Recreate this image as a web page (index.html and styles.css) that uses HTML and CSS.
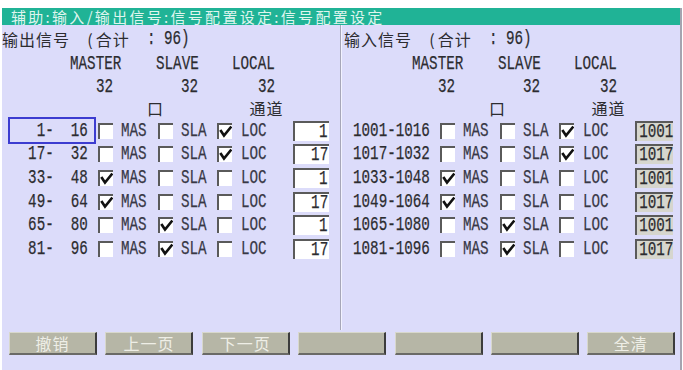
FILE: index.html
```html
<!DOCTYPE html>
<html lang="zh-CN">
<head>
<meta charset="utf-8">
<title>信号配置设定</title>
<link rel="stylesheet" href="styles.css">
</head>
<body>
<div class="screen">
  <div class="titlebar">辅助:输入/输出信号:信号配置设定:信号配置设定</div>
  <div class="main">
    <section class="panel">
      <div class="line hdr">
        <span class="cjk h-name">输出信号</span>
        <span class="cjk h-par">(</span>
        <span class="cjk h-sum">合计</span>
        <span class="lat h-col">:</span>
        <span class="lat h-tot">96)</span>
      </div>
      <div class="line mst">
        <span class="lat m-mas">MASTER</span>
        <span class="lat m-sla">SLAVE</span>
        <span class="lat m-loc">LOCAL</span>
      </div>
      <div class="line num">
        <span class="lat n-1">32</span>
        <span class="lat n-2">32</span>
        <span class="lat n-3">32</span>
      </div>
      <div class="line chl">
        <span class="cjk k-port">口</span>
        <span class="cjk k-chan">通道</span>
      </div>
      <div class="line row">
        <div class="c-lab sel"><span class="lat">   1-  16</span></div>
        <span class="cb c-cb1"></span><span class="lat dim c-mas">MAS</span>
        <span class="cb c-cb2"></span><span class="lat dim c-sla">SLA</span>
        <span class="cb c-cb3 on"><svg viewBox="0 0 13 14"><polyline points="2,6 5,10.5 11.5,2.5"/></svg></span><span class="lat dim c-loc">LOC</span>
        <span class="inp c-in"><span class="lat">1</span></span>
      </div>
      <div class="line row">
        <div class="c-lab"><span class="lat">  17-  32</span></div>
        <span class="cb c-cb1"></span><span class="lat dim c-mas">MAS</span>
        <span class="cb c-cb2"></span><span class="lat dim c-sla">SLA</span>
        <span class="cb c-cb3 on"><svg viewBox="0 0 13 14"><polyline points="2,6 5,10.5 11.5,2.5"/></svg></span><span class="lat dim c-loc">LOC</span>
        <span class="inp c-in"><span class="lat">17</span></span>
      </div>
      <div class="line row">
        <div class="c-lab"><span class="lat">  33-  48</span></div>
        <span class="cb c-cb1 on"><svg viewBox="0 0 13 14"><polyline points="2,6 5,10.5 11.5,2.5"/></svg></span><span class="lat dim c-mas">MAS</span>
        <span class="cb c-cb2"></span><span class="lat dim c-sla">SLA</span>
        <span class="cb c-cb3"></span><span class="lat dim c-loc">LOC</span>
        <span class="inp c-in"><span class="lat">1</span></span>
      </div>
      <div class="line row">
        <div class="c-lab"><span class="lat">  49-  64</span></div>
        <span class="cb c-cb1 on"><svg viewBox="0 0 13 14"><polyline points="2,6 5,10.5 11.5,2.5"/></svg></span><span class="lat dim c-mas">MAS</span>
        <span class="cb c-cb2"></span><span class="lat dim c-sla">SLA</span>
        <span class="cb c-cb3"></span><span class="lat dim c-loc">LOC</span>
        <span class="inp c-in"><span class="lat">17</span></span>
      </div>
      <div class="line row">
        <div class="c-lab"><span class="lat">  65-  80</span></div>
        <span class="cb c-cb1"></span><span class="lat dim c-mas">MAS</span>
        <span class="cb c-cb2 on"><svg viewBox="0 0 13 14"><polyline points="2,6 5,10.5 11.5,2.5"/></svg></span><span class="lat dim c-sla">SLA</span>
        <span class="cb c-cb3"></span><span class="lat dim c-loc">LOC</span>
        <span class="inp c-in"><span class="lat">1</span></span>
      </div>
      <div class="line row">
        <div class="c-lab"><span class="lat">  81-  96</span></div>
        <span class="cb c-cb1"></span><span class="lat dim c-mas">MAS</span>
        <span class="cb c-cb2 on"><svg viewBox="0 0 13 14"><polyline points="2,6 5,10.5 11.5,2.5"/></svg></span><span class="lat dim c-sla">SLA</span>
        <span class="cb c-cb3"></span><span class="lat dim c-loc">LOC</span>
        <span class="inp c-in"><span class="lat">17</span></span>
      </div>
    </section>
    <div class="divider"></div>
    <section class="panel right">
      <div class="line hdr">
        <span class="cjk h-name">输入信号</span>
        <span class="cjk h-par">(</span>
        <span class="cjk h-sum">合计</span>
        <span class="lat h-col">:</span>
        <span class="lat h-tot">96)</span>
      </div>
      <div class="line mst">
        <span class="lat m-mas">MASTER</span>
        <span class="lat m-sla">SLAVE</span>
        <span class="lat m-loc">LOCAL</span>
      </div>
      <div class="line num">
        <span class="lat n-1">32</span>
        <span class="lat n-2">32</span>
        <span class="lat n-3">32</span>
      </div>
      <div class="line chl">
        <span class="cjk k-port">口</span>
        <span class="cjk k-chan">通道</span>
      </div>
      <div class="line row">
        <div class="c-lab"><span class="lat">1001-1016</span></div>
        <span class="cb c-cb1"></span><span class="lat dim c-mas">MAS</span>
        <span class="cb c-cb2"></span><span class="lat dim c-sla">SLA</span>
        <span class="cb c-cb3 on"><svg viewBox="0 0 13 14"><polyline points="2,6 5,10.5 11.5,2.5"/></svg></span><span class="lat dim c-loc">LOC</span>
        <span class="inp gray c-in"><span class="lat">1001</span></span>
      </div>
      <div class="line row">
        <div class="c-lab"><span class="lat">1017-1032</span></div>
        <span class="cb c-cb1"></span><span class="lat dim c-mas">MAS</span>
        <span class="cb c-cb2"></span><span class="lat dim c-sla">SLA</span>
        <span class="cb c-cb3 on"><svg viewBox="0 0 13 14"><polyline points="2,6 5,10.5 11.5,2.5"/></svg></span><span class="lat dim c-loc">LOC</span>
        <span class="inp gray c-in"><span class="lat">1017</span></span>
      </div>
      <div class="line row">
        <div class="c-lab"><span class="lat">1033-1048</span></div>
        <span class="cb c-cb1 on"><svg viewBox="0 0 13 14"><polyline points="2,6 5,10.5 11.5,2.5"/></svg></span><span class="lat dim c-mas">MAS</span>
        <span class="cb c-cb2"></span><span class="lat dim c-sla">SLA</span>
        <span class="cb c-cb3"></span><span class="lat dim c-loc">LOC</span>
        <span class="inp gray c-in"><span class="lat">1001</span></span>
      </div>
      <div class="line row">
        <div class="c-lab"><span class="lat">1049-1064</span></div>
        <span class="cb c-cb1 on"><svg viewBox="0 0 13 14"><polyline points="2,6 5,10.5 11.5,2.5"/></svg></span><span class="lat dim c-mas">MAS</span>
        <span class="cb c-cb2"></span><span class="lat dim c-sla">SLA</span>
        <span class="cb c-cb3"></span><span class="lat dim c-loc">LOC</span>
        <span class="inp gray c-in"><span class="lat">1017</span></span>
      </div>
      <div class="line row">
        <div class="c-lab"><span class="lat">1065-1080</span></div>
        <span class="cb c-cb1"></span><span class="lat dim c-mas">MAS</span>
        <span class="cb c-cb2 on"><svg viewBox="0 0 13 14"><polyline points="2,6 5,10.5 11.5,2.5"/></svg></span><span class="lat dim c-sla">SLA</span>
        <span class="cb c-cb3"></span><span class="lat dim c-loc">LOC</span>
        <span class="inp gray c-in"><span class="lat">1001</span></span>
      </div>
      <div class="line row">
        <div class="c-lab"><span class="lat">1081-1096</span></div>
        <span class="cb c-cb1"></span><span class="lat dim c-mas">MAS</span>
        <span class="cb c-cb2 on"><svg viewBox="0 0 13 14"><polyline points="2,6 5,10.5 11.5,2.5"/></svg></span><span class="lat dim c-sla">SLA</span>
        <span class="cb c-cb3"></span><span class="lat dim c-loc">LOC</span>
        <span class="inp gray c-in"><span class="lat">1017</span></span>
      </div>
    </section>
  </div>
  <div class="buttons">
    <button class="btn">撤销</button>
    <button class="btn">上一页</button>
    <button class="btn">下一页</button>
    <button class="btn"></button>
    <button class="btn"></button>
    <button class="btn"></button>
    <button class="btn">全清</button>
  </div>
</div>
</body>
</html>
```

FILE: styles.css
```css
html, body {
  margin: 0;
  padding: 0;
  background: #ffffff;
}
body {
  width: 683px;
  height: 370px;
  overflow: hidden;
}
.screen {
  margin: 8px 0 0 2px;
  width: 678px;
  height: 362px;
  background: #dcdcfa;
  border-right: 2px solid #a4a4b0;
  display: flex;
  flex-direction: column;
}
.titlebar {
  height: 17px;
  line-height: 17px;
  background: #20b396;
  color: #dff5ee;
  font-family: "Noto Sans CJK SC", sans-serif;
  font-size: 15px;
  letter-spacing: 2.3px;
  padding-left: 9px;
  white-space: nowrap;
}
.main {
  display: flex;
  height: 305px;
}
.panel {
  width: 338px;
  padding-top: 2px;
  display: flex;
  flex-direction: column;
}
.panel.right {
  width: 336px;
  padding-left: 2px;
}
.divider {
  width: 1px;
  border-left: 1px solid #a6a6b8;
  background: #f2f2ff;
}
.line {
  display: grid;
  grid-template-columns: repeat(39, 8.54px);
  align-items: center;
  color: #2c2c30;
}
.hdr { height: 24px; }
.mst { height: 25px; }
.num { height: 21px; }
.chl { height: 22px; }
.row { height: 23.6px; }

.cjk {
  font-family: "Noto Sans CJK SC", sans-serif;
  font-size: 16px;
  letter-spacing: 1px;
  line-height: 18px;
  white-space: nowrap;
}
/* tall, narrow monospace text on an 8.54px character grid */
.lat {
  justify-self: start;
  display: inline-block;
  font-family: "Liberation Mono", monospace;
  font-weight: normal;
  font-size: 21px;
  line-height: 18px;
  white-space: pre;
  -webkit-text-stroke: 0.25px currentColor;
  transform: scaleX(0.678);
  transform-origin: 0 50%;
}
.dim { color: #383846; }

.h-name { grid-column: 1 / span 8; }
.h-par  { grid-column: 11 / span 1; }
.h-sum  { grid-column: 12 / span 4; }
.h-col  { grid-column: 18 / span 1; }
.h-tot  { grid-column: 20 / span 3; }

.m-mas { grid-column: 9 / span 6; }
.m-sla { grid-column: 19 / span 5; }
.m-loc { grid-column: 28 / span 5; }

.n-1 { grid-column: 12 / span 2; }
.n-2 { grid-column: 22 / span 2; }
.n-3 { grid-column: 31 / span 2; }

.k-port { grid-column: 18 / span 2; }
.k-chan { grid-column: 30 / span 4; }

.c-lab { grid-column: 2 / span 9; height: 21px; display: flex; align-items: center; }
.c-cb1 { grid-column: 12 / span 2; }
.c-mas { grid-column: 15 / span 3; }
.c-cb2 { grid-column: 19 / span 2; }
.c-sla { grid-column: 22 / span 3; }
.c-cb3 { grid-column: 26 / span 2; }
.c-loc { grid-column: 29 / span 3; }
.c-in  { grid-column: 35 / span 4; }

.sel {
  outline: 2px solid #3c3cd0;
  outline-offset: 1px;
  margin-right: -6px;
}

.cb {
  justify-self: end;
  width: 13px;
  height: 14px;
  background: #ffffff;
  border-top: 2px solid #5a5a5a;
  border-left: 2px solid #5a5a5a;
  display: block;
}
.cb svg {
  display: block;
  width: 13px;
  height: 14px;
}
.cb polyline {
  fill: none;
  stroke: #111111;
  stroke-width: 2.6;
  stroke-linecap: square;
}

.inp {
  justify-self: start;
  width: 34px;
  height: 18px;
  margin-left: 1px;
  background: #ffffff;
  border-top: 2px solid #5a5a5a;
  border-left: 2px solid #5a5a5a;
  display: flex;
  justify-content: flex-end;
  align-items: center;
  overflow: visible;
  color: #2c2c30;
}
.inp .lat {
  flex: none;
  transform-origin: 100% 50%;
  margin-right: 1px;
}
.inp.gray {
  width: 36px;
  background: #d6d6ce;
}
.inp.gray .lat {
  margin-right: 0;
}

.buttons {
  display: flex;
  gap: 8.4px;
  padding: 2px 0 0 7px;
}
.btn {
  width: 88px;
  height: 23px;
  padding: 0;
  margin: 0;
  background: #b6b6a6;
  border-top: 1px solid #d8d8cc;
  border-left: 1px solid #d8d8cc;
  border-right: 2px solid #3c3c3c;
  border-bottom: 2px solid #6a6a66;
  color: #eeeee6;
  font-family: "Noto Sans CJK SC", sans-serif;
  font-size: 16px;
  letter-spacing: 1px;
  line-height: 20px;
}
```
